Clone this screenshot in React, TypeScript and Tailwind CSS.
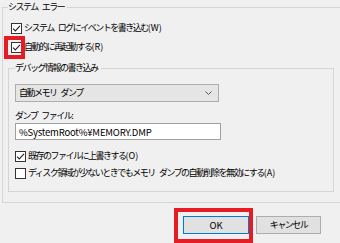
import type { ReactNode } from 'react'

// Japanese label: word gaps kept visible, trailing access key "(W)" at normal spacing
function Jp({ s }: { s: string }) {
  const m = s.match(/^(.*?)(\(.\))?$/)
  const body = m ? m[1] : s
  const key = m && m[2]
  const words = body.split(' ')
  return (
    <span className="whitespace-nowrap tracking-[-1.5px]">
      {words.map((w, i) => (
        <span key={i}>
          {i > 0 && <span className="inline-block w-[4px]" />}
          {w}
        </span>
      ))}
      {key && <span className="tracking-normal">{key}</span>}
    </span>
  )
}

function Box({ checked }: { checked?: boolean }) {
  return (
    <span className="flex h-[11px] w-[11px] shrink-0 items-center justify-center border border-[#333] bg-white">
      {checked && (
        <svg viewBox="0 0 9 9" className="h-[9px] w-[9px]" fill="none" stroke="#222" strokeWidth={1.1}>
          <path d="M1 4.6l2.3 2.3L8 1.8" />
        </svg>
      )}
    </span>
  )
}

function Row({ checked, children, mark }: { checked?: boolean; children: string; mark?: boolean }) {
  return (
    <div className="flex h-[14px] items-center gap-[2px]">
      <span className="relative flex">
        <Box checked={checked} />
        {/* red annotation frame */}
        {mark && (
          <span className="absolute -left-[7px] -top-[6px] h-[23px] w-[21px] border-4 border-[#e51c23]" />
        )}
      </span>
      <Jp s={children} />
    </div>
  )
}

function Group({ label, className, children }: { label: string; className: string; children: ReactNode }) {
  return (
    <fieldset className={`border border-[#d5d5d5] ${className}`}>
      <legend className="pr-[3px] leading-[10px]">
        <Jp s={label} />
      </legend>
      {children}
    </fieldset>
  )
}

export default function App() {
  return (
    <div className="h-[243px] w-[340px] overflow-hidden bg-[#f0f0f0] font-['Noto_Sans_CJK_JP',sans-serif] text-[9px] leading-[10px] text-black">
      <Group label="システム エラー" className="ml-[2px] mt-[2px] w-[350px] px-[5px] pb-[10px]">
        <div className="ml-[3px] mt-[9px] flex flex-col gap-[5px]">
          <Row checked>システム ログにイベントを書き込む(W)</Row>
          <Row checked mark>自動的に再起動する(R)</Row>
        </div>

        <Group label="デバッグ情報の書き込み" className="mt-[9px] w-[326px] px-[6px] pb-[11px]">
          <div className="mt-[11px] flex h-[18px] w-[204px] items-center justify-between border border-[#adadad] bg-[#e5e5e5] pl-[3px] pr-[6px]">
            <Jp s="自動メモリ ダンプ" />
            <svg viewBox="0 0 7 4" className="h-[4px] w-[7px]" fill="none" stroke="#555" strokeWidth={1}>
              <path d="M0.5 0.5L3.5 3.5L6.5 0.5" />
            </svg>
          </div>

          <div className="mt-[9px] h-[10px]">
            <Jp s="ダンプ ファイル:" />
          </div>

          <div className="mt-[2px] flex h-[17px] w-[206px] items-center border border-[#a0a0a0] bg-white pl-[3px] text-[9.5px]">
            <span className="tracking-[-0.2px]">%SystemRoot%¥MEMORY.DMP</span>
          </div>

          <div className="mt-[9px] flex flex-col gap-[3px]">
            <Row checked>既存のファイルに上書きする(O)</Row>
            <Row>ディスク領域が少ないときでもメモリ ダンプの自動削除を無効にする(A)</Row>
          </div>
        </Group>
      </Group>

      {/* buttons */}
      <div className="mt-[5px] flex items-start justify-end gap-[3px] pr-[19px]">
        <div className="border-4 border-[#e51c23] pb-[5px] pl-[5px] pt-[4px]">
          <button className="flex h-[18px] w-[66px] items-center justify-center border border-[#0078d7] bg-[#e1e1e1] text-[9.5px]">
            OK
          </button>
        </div>
        <button className="mt-[8px] flex h-[18px] w-[65px] items-center justify-center border border-[#adadad] bg-[#e1e1e1]">
          <Jp s="キャンセル" />
        </button>
      </div>
    </div>
  )
}
